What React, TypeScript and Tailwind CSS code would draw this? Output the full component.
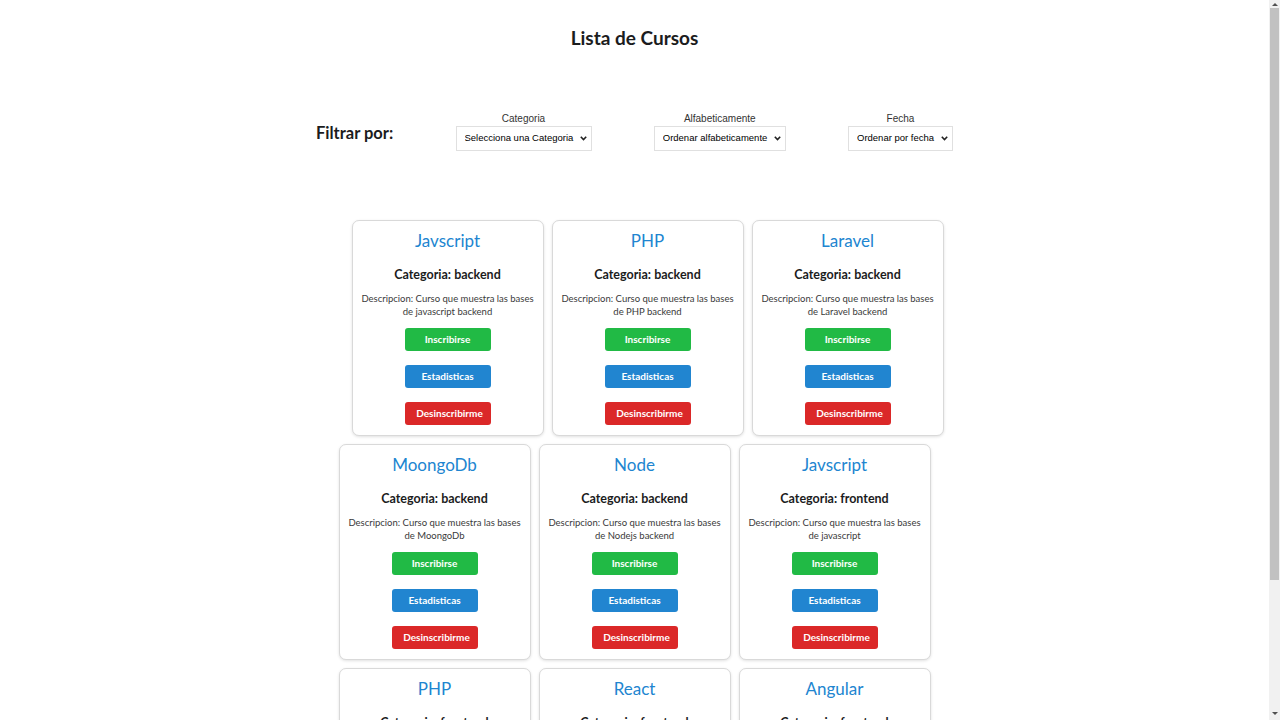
import React from "react";

type Curso = {
  nombre: string;
  categoria: string;
  descripcion: string;
};

const cursos: Curso[] = [
  { nombre: "Javscript", categoria: "backend", descripcion: "Curso que muestra las bases de javascript backend" },
  { nombre: "PHP", categoria: "backend", descripcion: "Curso que muestra las bases de PHP backend" },
  { nombre: "Laravel", categoria: "backend", descripcion: "Curso que muestra las bases de Laravel backend" },
  { nombre: "MoongoDb", categoria: "backend", descripcion: "Curso que muestra las bases de MoongoDb" },
  { nombre: "Node", categoria: "backend", descripcion: "Curso que muestra las bases de Nodejs backend" },
  { nombre: "Javscript", categoria: "frontend", descripcion: "Curso que muestra las bases de javascript" },
  { nombre: "PHP", categoria: "frontend", descripcion: "Curso que muestra las bases de PHP frontend" },
  { nombre: "React", categoria: "frontend", descripcion: "Curso que muestra las bases de React frontend" },
  { nombre: "Angular", categoria: "frontend", descripcion: "Curso que muestra las bases de Angular frontend" },
];

const CursoCard: React.FC<{ curso: Curso }> = ({ curso }) => {
  return (
    <div className="w-[192px] h-[216px] shrink-0 bg-white border border-[#d9d9d9] rounded-[7px] shadow-[0_1px_3px_rgba(0,0,0,0.12)] flex flex-col items-center pt-[8px]">
      <h2 className="text-[17px] leading-[24px] text-[#2185d0]">{curso.nombre}</h2>
      <h3 className="mt-[13px] text-[12.5px] leading-[18px] font-bold text-[#1b1c1d]">
        Categoria: {curso.categoria}
      </h3>
      <p className="mt-[8px] px-[5px] text-center text-[9.5px] leading-[13px] text-[#3a3a3a]">
        Descripcion: {curso.descripcion}
      </p>
      <div className="mt-[10px] flex flex-col gap-[14px]">
        <button className="w-[86px] h-[23px] rounded-[3px] bg-[#21ba45] text-white text-[10px] font-bold">
          Inscribirse
        </button>
        <button className="w-[86px] h-[23px] rounded-[3px] bg-[#2185d0] text-white text-[10px] font-bold">
          Estadisticas
        </button>
        <button className="w-[86px] h-[23px] rounded-[3px] bg-[#db2828] text-white text-[10px] font-bold pl-[4px]">
          Desinscribirme
        </button>
      </div>
    </div>
  );
};

const Filtro: React.FC<{ label: string; options: string[] }> = ({ label, options }) => (
  <div className="flex flex-col items-center">
    <label className="text-[10px] leading-[13px] text-[#333] font-['Liberation_Sans',sans-serif]">{label}</label>
    <div className="relative mt-[1px] flex">
      <select className="appearance-none h-[25px] pl-[8px] pr-[17px] border border-[#e0e0e0] bg-white text-[9.5px] text-black font-['Liberation_Sans',sans-serif]">
        {options.map((o) => (
          <option key={o}>{o}</option>
        ))}
      </select>
      <svg
        className="pointer-events-none absolute right-[5px] top-[10px] w-[7px] h-[5px]"
        viewBox="0 0 7 5"
        fill="none"
        stroke="#222"
        strokeWidth={1.6}
      >
        <path d="M0.8 0.8L3.5 3.6L6.2 0.8" />
      </svg>
    </div>
  </div>
);

export default function App() {
  const filas = [cursos.slice(0, 3), cursos.slice(3, 6), cursos.slice(6, 9)];

  return (
    <div className="h-screen flex bg-white font-['Lato',sans-serif] text-[#1b1c1d] overflow-hidden">
      <div className="flex-1 pt-[26px] pb-[8px]">
        <h1 className="text-center text-[19px] leading-[24px] font-bold">Lista de Cursos</h1>

        {/* Filtros */}
        <div className="mt-[62px] w-[637px] mx-auto flex items-center justify-between">
          <span className="text-[16.5px] font-bold leading-[22px] mt-[2px]">Filtrar por:</span>
          <Filtro label="Categoria" options={["Selecciona una Categoria", "backend", "frontend"]} />
          <Filtro label="Alfabeticamente" options={["Ordenar alfabeticamente", "A-Z", "Z-A"]} />
          <Filtro label="Fecha" options={["Ordenar por fecha", "Recientes", "Antiguos"]} />
        </div>

        {/* Cursos */}
        <div className="mt-[69px] flex flex-col gap-[8px]">
          {filas.map((fila, i) => (
            <div
              key={i}
              className={i === 0 ? "flex justify-center gap-[8px] pl-[26px]" : "flex justify-center gap-[8px]"}
            >
              {fila.map((c, j) => (
                <CursoCard key={j} curso={c} />
              ))}
            </div>
          ))}
        </div>
      </div>

      {/* Scrollbar */}
      <div className="w-[11px] shrink-0 bg-[#f1f1f1] flex flex-col items-center">
        <span className="mt-[3px] h-0 w-0 border-x-[3px] border-x-transparent border-b-[3px] border-b-[#505050]" />
        <div className="mt-[2px] w-[9px] h-[572px] bg-[#c1c1c1]" />
        <div className="flex-1" />
        <span className="mb-[5px] h-0 w-0 border-x-[3px] border-x-transparent border-t-[3px] border-t-[#505050]" />
      </div>
    </div>
  );
}
